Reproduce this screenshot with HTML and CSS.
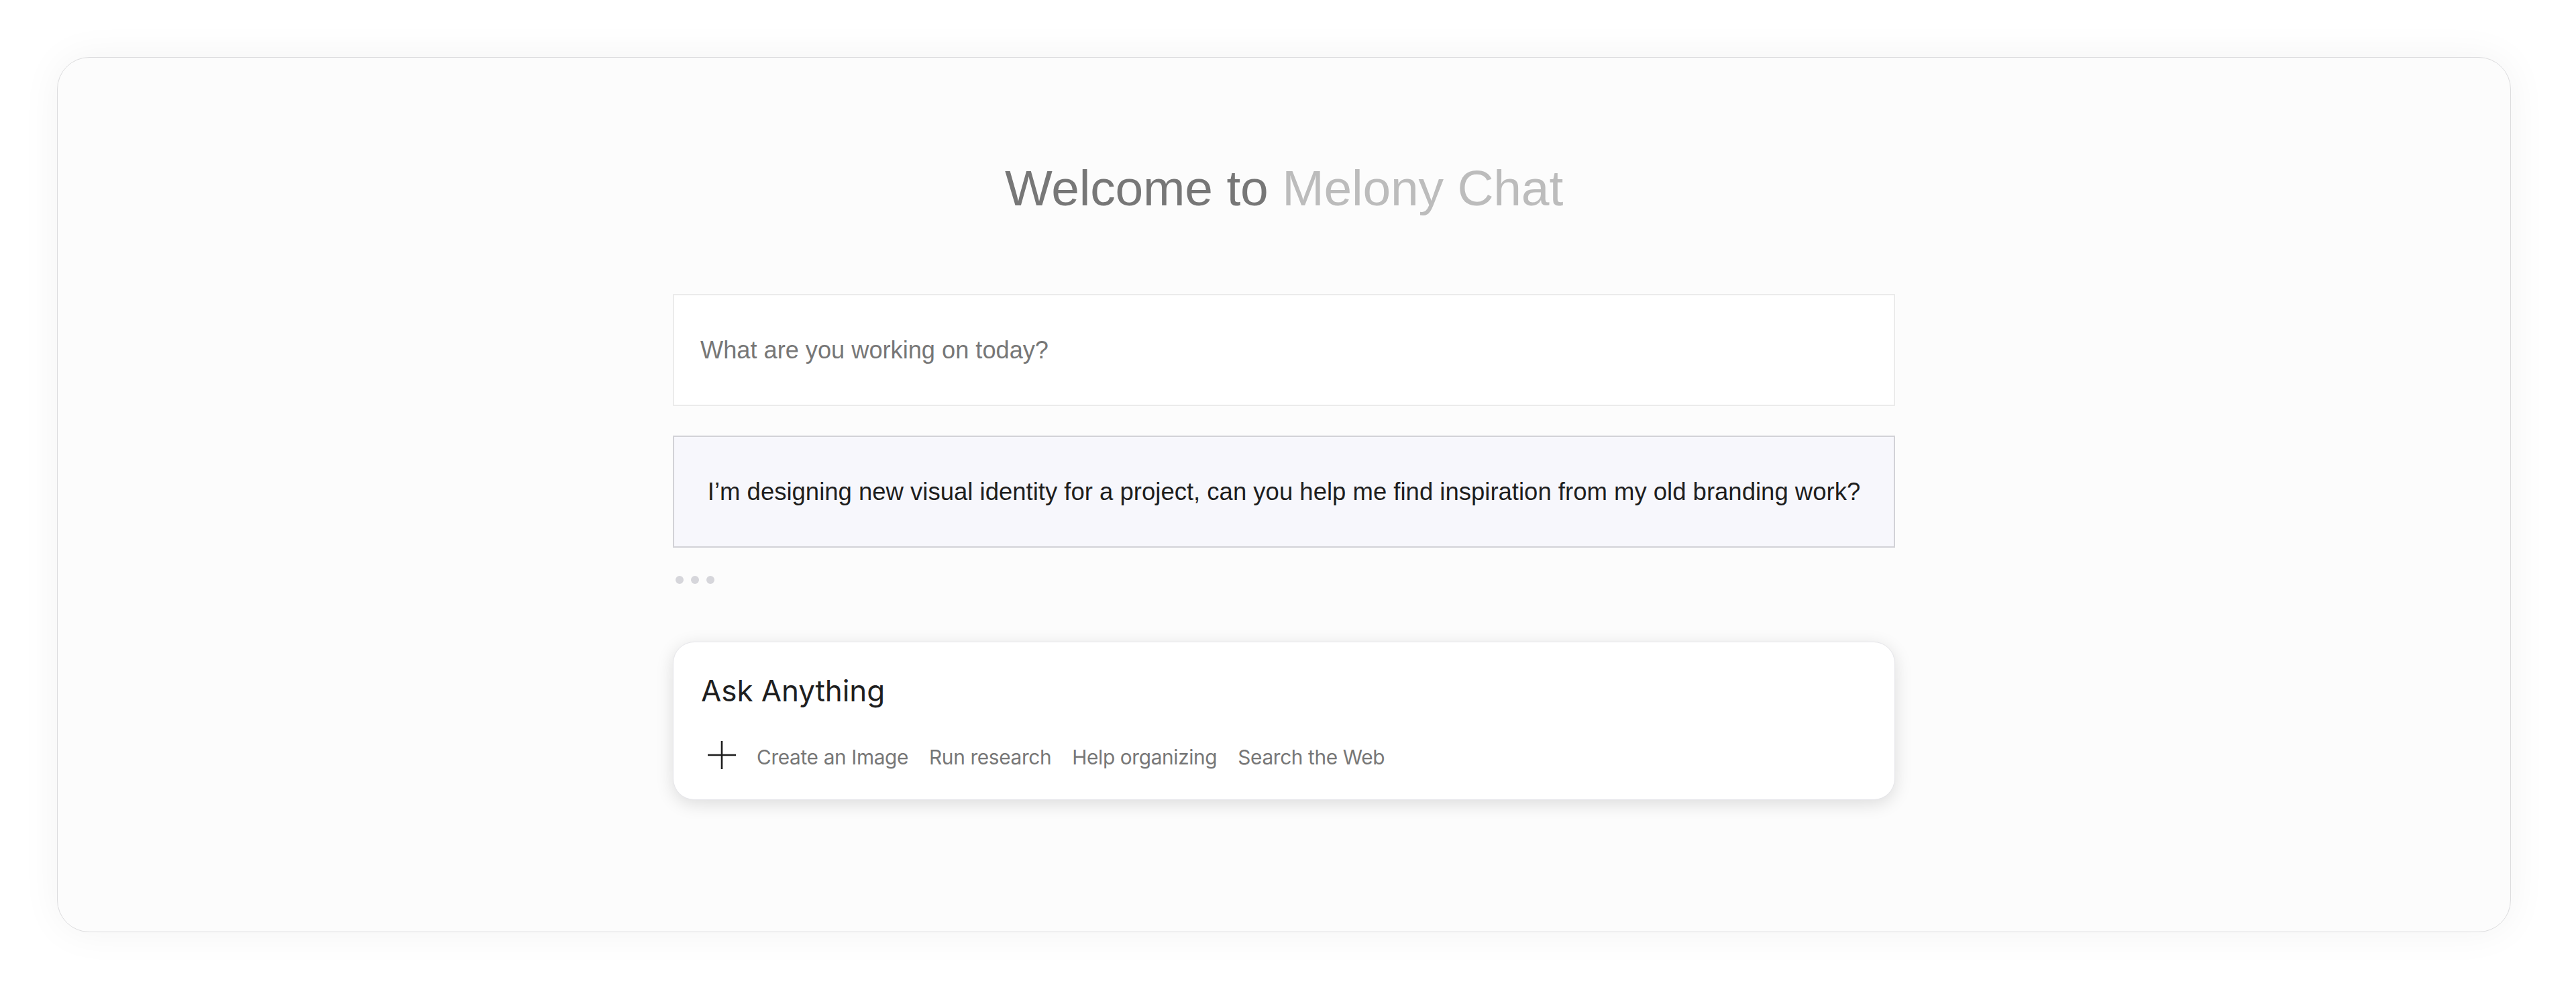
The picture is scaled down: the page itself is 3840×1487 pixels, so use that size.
FILE: index.html
```html
<!DOCTYPE html>
<html lang="en">
<head>
<meta charset="utf-8">
<title>Melony Chat</title>
<link rel="stylesheet" href="styles.css">
</head>
<body>
<div class="page">
  <main class="card">
    <h1 class="title"><span class="title-strong">Welcome to</span> <span class="title-soft">Melony Chat</span></h1>
    <div class="column">
      <div class="prompt-box">What are you working on today?</div>
      <div class="message-box">I’m designing new visual identity for a project, can you help me find inspiration from my old branding work?</div>
      <div class="typing">
        <span class="dot"></span><span class="dot"></span><span class="dot"></span>
      </div>
      <div class="ask-box">
        <div class="ask-title">Ask Anything</div>
        <div class="ask-actions">
          <span class="plus">
            <svg width="42" height="42" viewBox="0 0 42 42" fill="none" stroke="#1c1c1c" stroke-width="2.6" stroke-linecap="butt">
              <line x1="21" y1="0" x2="21" y2="42"/>
              <line x1="0" y1="21" x2="42" y2="21"/>
            </svg>
          </span>
          <span class="chip">Create an Image</span>
          <span class="chip">Run research</span>
          <span class="chip">Help organizing</span>
          <span class="chip">Search the Web</span>
        </div>
      </div>
    </div>
  </main>
</div>
</body>
</html>
```
FILE: styles.css
```css
html, body {
  margin: 0;
  padding: 0;
  background: #ffffff;
}

body {
  font-family: "Liberation Sans", Arial, sans-serif;
}

.page {
  width: 3840px;
  height: 1487px;
  box-sizing: border-box;
  padding: 85px 97px 98px 85px;
  display: flex;
}

.card {
  flex: 1;
  box-sizing: border-box;
  background: #fcfcfc;
  border: 1.5px solid #dcdcde;
  border-radius: 48px;
  box-shadow: 0 0 60px rgba(0, 0, 0, 0.05);
  display: flex;
  flex-direction: column;
  align-items: center;
  padding-top: 157px;
}

.title {
  margin: 0;
  font-family: "Liberation Sans", Arial, sans-serif;
  font-weight: 400;
  font-size: 75px;
  line-height: 75px;
  letter-spacing: -0.2px;
}

.title-strong {
  color: #777777;
}

.title-soft {
  color: #bcbcbc;
}

.column {
  width: 1822px;
  margin-top: 120px;
  display: flex;
  flex-direction: column;
}

.prompt-box {
  box-sizing: border-box;
  height: 167px;
  background: #ffffff;
  border: 2px solid #ebebeb;
  display: flex;
  align-items: center;
  padding-left: 39px;
  font-size: 36.2px;
  color: #777777;
}

.message-box {
  box-sizing: border-box;
  height: 167px;
  margin-top: 44px;
  background: #f7f7fc;
  border: 2px solid #d2d2d7;
  display: flex;
  align-items: center;
  justify-content: center;
  font-size: 36.5px;
  color: #1e1e1e;
}

.typing {
  margin-top: 42px;
  display: flex;
  gap: 11px;
  padding-left: 4px;
}

.dot {
  width: 12px;
  height: 12px;
  border-radius: 50%;
  background: #d6d6db;
}

.ask-box {
  margin-top: 86px;
  box-sizing: border-box;
  height: 236px;
  background: #ffffff;
  border: 1.5px solid #e6e6ea;
  border-radius: 32px;
  box-shadow: 0 6px 26px rgba(0, 0, 0, 0.13);
  padding: 50px 40px 0 41px;
  font-family: "Inter", "Noto Sans", sans-serif;
}

.ask-title {
  font-size: 44px;
  line-height: 45px;
  color: #1f1f1f;
  letter-spacing: -0.1px;
}

.ask-actions {
  margin-top: 52px;
  display: flex;
  align-items: center;
  gap: 31px;
}

.plus {
  width: 42px;
  height: 42px;
  margin-left: 10px;
  display: flex;
}

.chip {
  font-size: 29.8px;
  line-height: 36px;
  letter-spacing: -0.35px;
  color: #777777;
  padding-top: 5px;
}
```
